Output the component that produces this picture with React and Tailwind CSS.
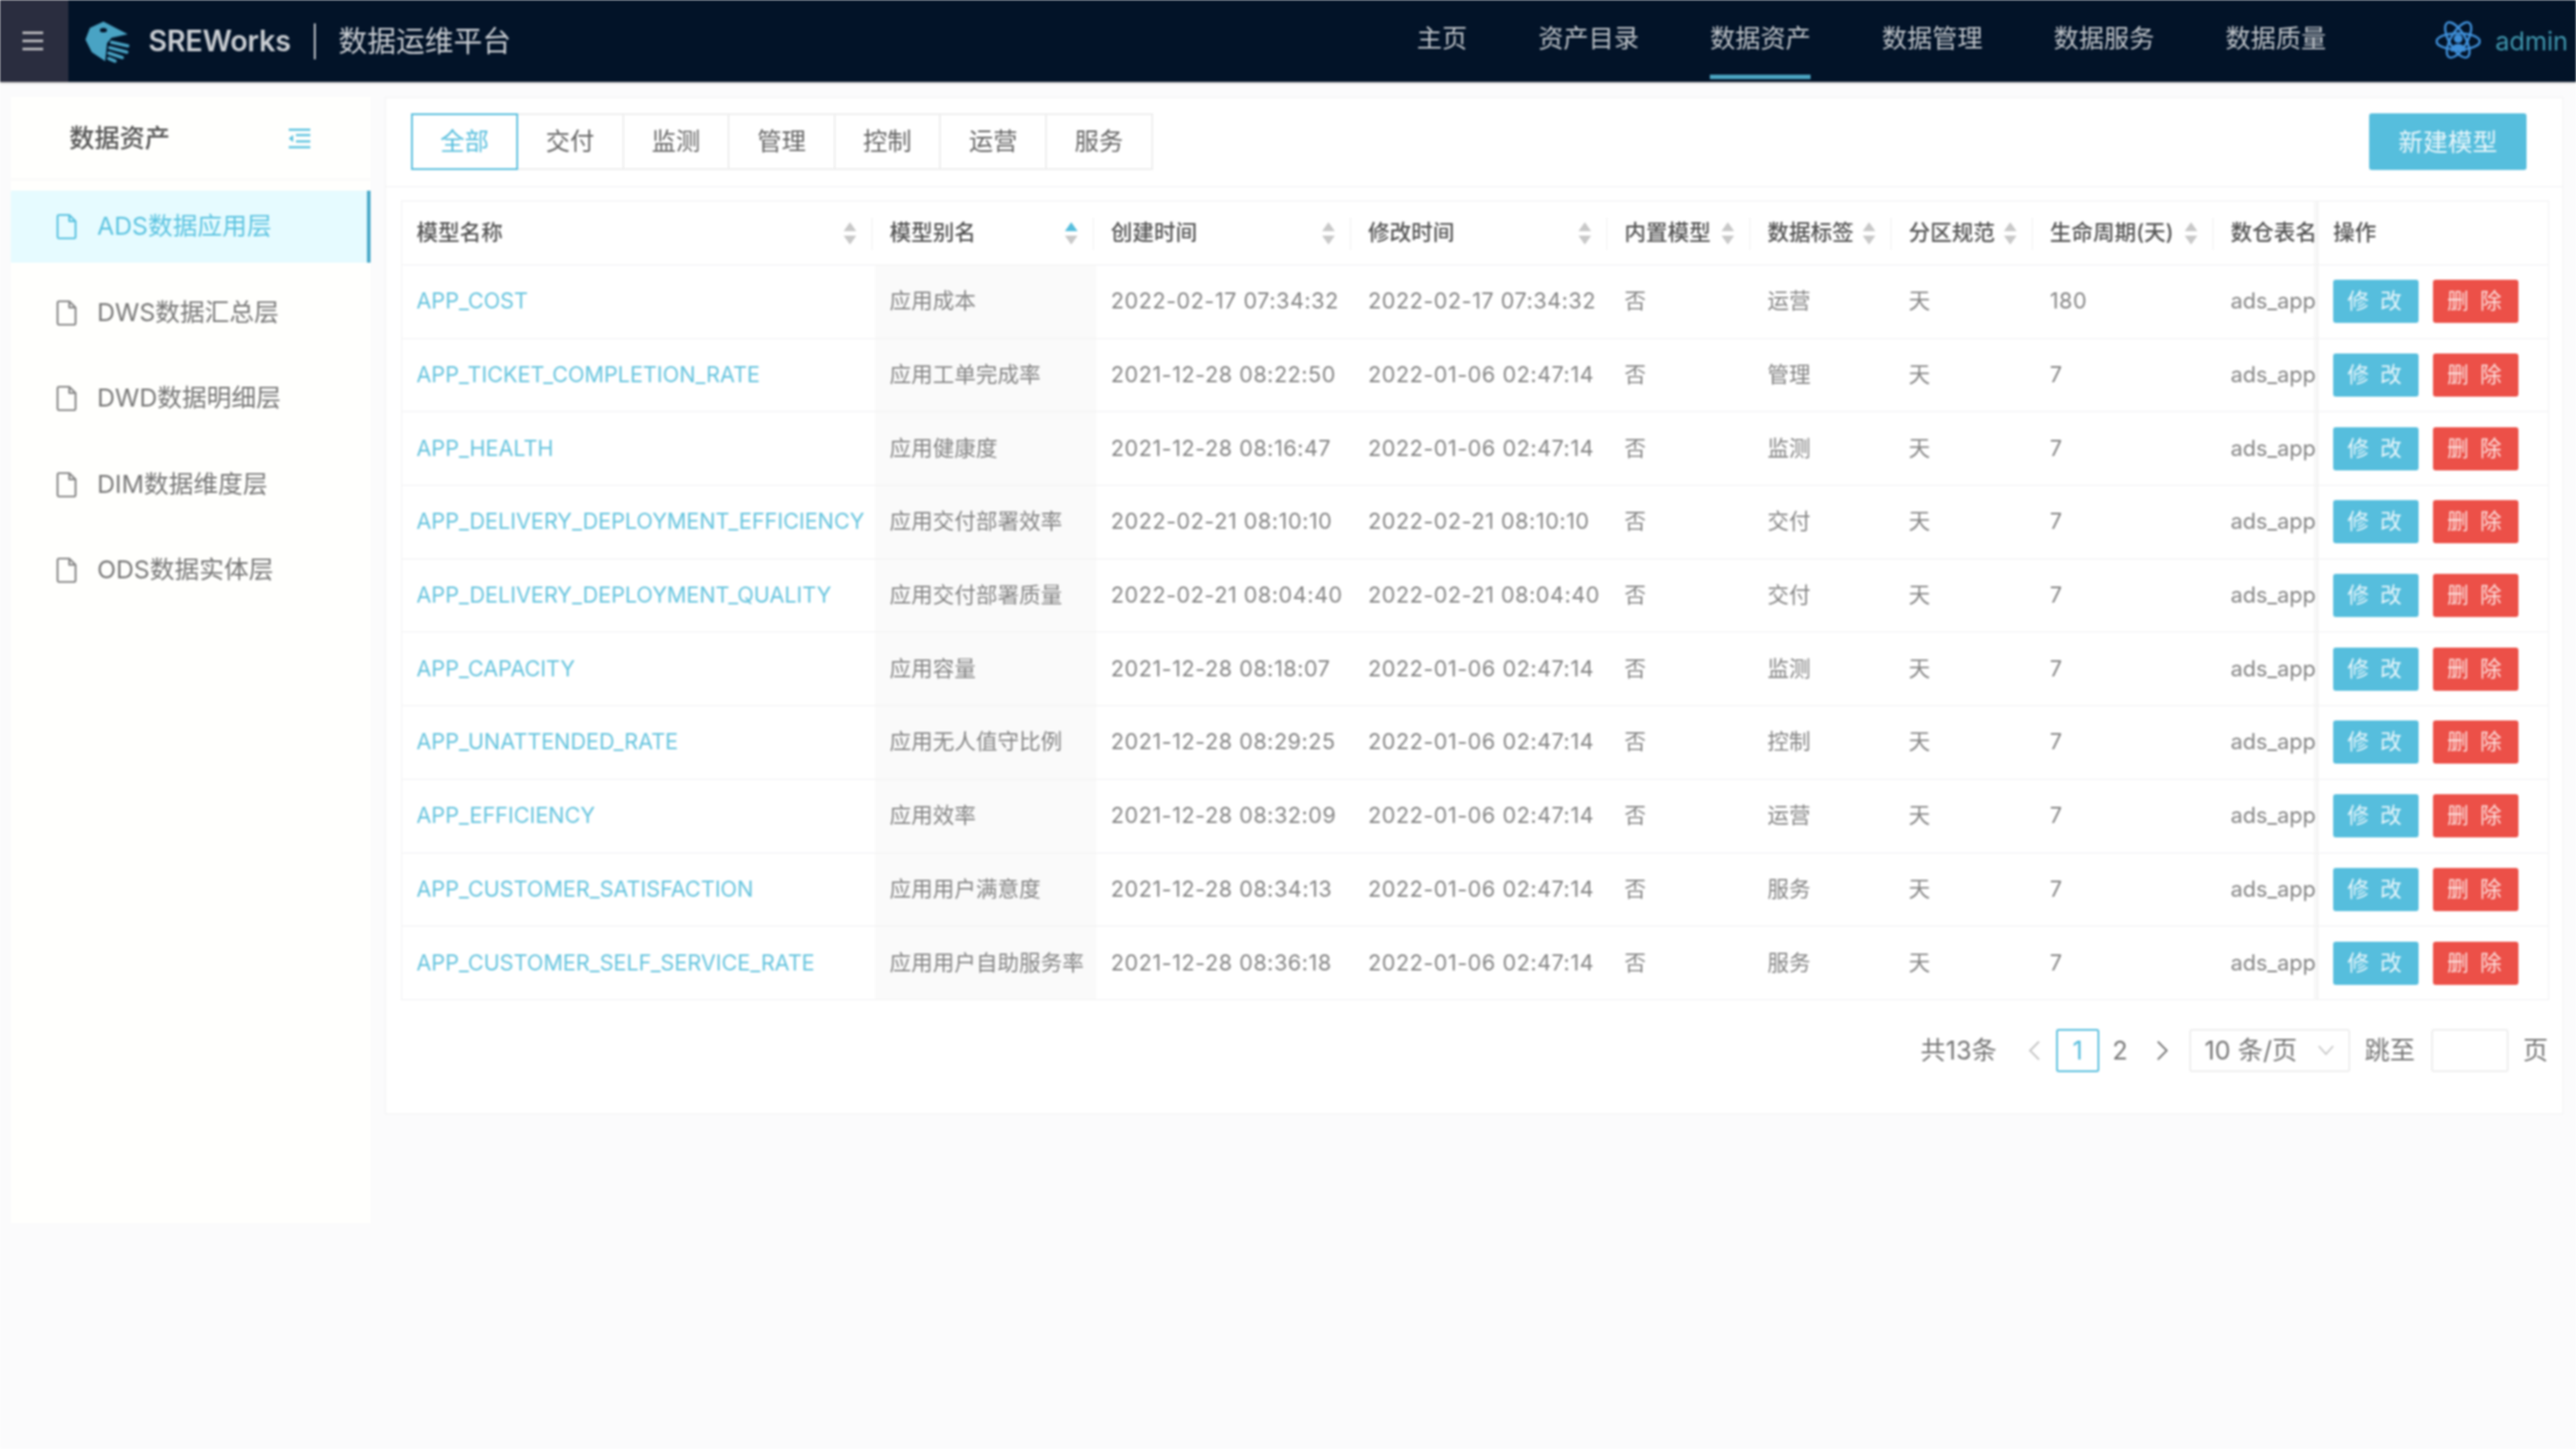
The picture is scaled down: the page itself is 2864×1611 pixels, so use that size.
import React from 'react';

const navItems = ['主页', '资产目录', '数据资产', '数据管理', '数据服务', '数据质量'];
const layers = ['ADS数据应用层', 'DWS数据汇总层', 'DWD数据明细层', 'DIM数据维度层', 'ODS数据实体层'];
const tabs = ['全部', '交付', '监测', '管理', '控制', '运营', '服务'];

const columns = [
  { title: '模型名称', sort: true },
  { title: '模型别名', sort: true, active: true },
  { title: '创建时间', sort: true },
  { title: '修改时间', sort: true },
  { title: '内置模型', sort: true },
  { title: '数据标签', sort: true },
  { title: '分区规范', sort: true },
  { title: '生命周期(天)', sort: true },
  { title: '数仓表名' },
];

const rows = [
  ['APP_COST', '应用成本', '2022-02-17 07:34:32', '2022-02-17 07:34:32', '运营', '180'],
  ['APP_TICKET_COMPLETION_RATE', '应用工单完成率', '2021-12-28 08:22:50', '2022-01-06 02:47:14', '管理', '7'],
  ['APP_HEALTH', '应用健康度', '2021-12-28 08:16:47', '2022-01-06 02:47:14', '监测', '7'],
  ['APP_DELIVERY_DEPLOYMENT_EFFICIENCY', '应用交付部署效率', '2022-02-21 08:10:10', '2022-02-21 08:10:10', '交付', '7'],
  ['APP_DELIVERY_DEPLOYMENT_QUALITY', '应用交付部署质量', '2022-02-21 08:04:40', '2022-02-21 08:04:40', '交付', '7'],
  ['APP_CAPACITY', '应用容量', '2021-12-28 08:18:07', '2022-01-06 02:47:14', '监测', '7'],
  ['APP_UNATTENDED_RATE', '应用无人值守比例', '2021-12-28 08:29:25', '2022-01-06 02:47:14', '控制', '7'],
  ['APP_EFFICIENCY', '应用效率', '2021-12-28 08:32:09', '2022-01-06 02:47:14', '运营', '7'],
  ['APP_CUSTOMER_SATISFACTION', '应用用户满意度', '2021-12-28 08:34:13', '2022-01-06 02:47:14', '服务', '7'],
  ['APP_CUSTOMER_SELF_SERVICE_RATE', '应用用户自助服务率', '2021-12-28 08:36:18', '2022-01-06 02:47:14', '服务', '7'],
];

const gridCols = 'grid grid-cols-[526px_246px_286px_285px_159px_157px_157px_201px_114px_255px]';

function Logo() {
  return (
    <svg width="50" height="50" viewBox="14 10 50 50" fill="none">
      <path d="M35 13 L62 27 L44 31 L39 37 L37 57 L22 47 L15 33 L20 20 Z" fill="#49a3c4" />
      <ellipse cx="35" cy="22.5" rx="4" ry="2.6" fill="#04162b" />
      <g stroke="#49a3c4" strokeWidth="3.6" strokeLinecap="round">
        <path d="M44 36 L62 40" />
        <path d="M42 42 L61 47" />
        <path d="M41 48 L56 53" />
        <path d="M41 54 L48 57" />
      </g>
    </svg>
  );
}

function Atom() {
  return (
    <svg width="50" height="46" viewBox="0 0 50 46" fill="none" stroke="#3f8fd8" strokeWidth="2.6">
      <ellipse cx="25" cy="23" rx="9" ry="24" transform="rotate(30 25 23) scale(1 0.92)" />
      <ellipse cx="25" cy="23" rx="9" ry="24" transform="rotate(-30 25 23) scale(1 0.92)" />
      <ellipse cx="25" cy="23" rx="9" ry="24" transform="rotate(90 25 23)" />
      <circle cx="25" cy="20" r="3.5" fill="#3f8fd8" />
      <path d="M18 33 C18 25 32 25 32 33 Z" fill="#3f8fd8" />
    </svg>
  );
}

function FileIcon({ color }) {
  return (
    <svg width="24" height="30" viewBox="0 0 24 30" fill="none" stroke={color} strokeWidth="2.2" strokeLinejoin="round">
      <path d="M2 4 a2 2 0 0 1 2 -2 H15 L22 9 V26 a2 2 0 0 1 -2 2 H4 a2 2 0 0 1 -2 -2 Z" />
      <path d="M15 2 V9 H22" />
    </svg>
  );
}

function IndentIcon() {
  return (
    <svg width="25" height="24" viewBox="0 0 25 24" fill="#5cc3e0">
      <rect x="1" y="1" width="24" height="2.4" />
      <rect x="9" y="7" width="16" height="2.4" />
      <rect x="9" y="14" width="16" height="2.4" />
      <rect x="1" y="20.5" width="24" height="2.4" />
      <path d="M1 12 L6 8 V16 Z" />
    </svg>
  );
}

function SortIcon({ active }) {
  return (
    <svg width="16" height="27" viewBox="0 0 16 27" className="shrink-0">
      <path d="M8 1 L15 11 H1 Z" fill={active ? '#56bedd' : '#c8c8c8'} />
      <path d="M8 26 L15 16 H1 Z" fill="#c8c8c8" />
    </svg>
  );
}

function Chevron({ dir, color }) {
  return (
    <svg width="14" height="24" viewBox="0 0 14 24" fill="none" stroke={color} strokeWidth="2">
      <path d={dir === 'left' ? 'M12 2 L2 12 L12 22' : 'M2 2 L12 12 L2 22'} />
    </svg>
  );
}

function Header() {
  return (
    <header className="flex h-[91px] items-stretch bg-[#021328] shadow-[0_1px_2px_rgba(0,0,0,0.35)]">
      <div className="flex w-[76px] items-center justify-center bg-[#2a2d3f] pr-[3px]">
        <div className="flex h-[21px] w-[23px] flex-col justify-between">
          <span className="h-[3px] bg-[#b4b4b8]" />
          <span className="h-[3px] bg-[#b4b4b8]" />
          <span className="h-[3px] bg-[#b4b4b8]" />
        </div>
      </div>
      <div className="ml-[18px] flex items-center">
        <Logo />
      </div>
      <div className="ml-[21px] flex items-center text-[32px] font-semibold tracking-[-0.3px] text-[#c9cdd2]">SREWorks</div>
      <div className="ml-[26px] mt-[26px] h-[40px] w-[2px] bg-[#c9cdd2]" />
      <div className="ml-[25px] flex items-center text-[32px] text-[#c9cdd2]">数据运维平台</div>
      <nav className="ml-auto flex gap-[79px]">
        {navItems.map((item) => (
          <div key={item} className="relative flex items-center pb-[6px] text-[28px] text-[#bfc4c9]">
            {item}
            {item === '数据资产' && <span className="absolute bottom-[3px] left-0 h-[5px] w-full bg-[#4aa3c0]" />}
          </div>
        ))}
      </nav>
      <div className="ml-[122px] flex items-center pr-[9px]">
        <Atom />
        <span className="ml-[16px] text-[28px] text-[#3f96ad]">admin</span>
      </div>
    </header>
  );
}

function Sidebar() {
  return (
    <aside className="ml-[12px] h-[1252px] w-[400px] shrink-0 bg-[#fffffd]">
      <div className="flex h-[92px] items-center justify-between border-b border-[#f5f5f5] pl-[65px] pr-[67px]">
        <span className="text-[28px] font-medium text-[#555]">数据资产</span>
        <IndentIcon />
      </div>
      <div className="mt-[12px] flex flex-col gap-[15.5px]">
        {layers.map((name, i) => (
          <div
            key={name}
            className={
              i === 0
                ? 'flex h-[80px] items-center gap-[22px] border-r-4 border-[#49a9c9] bg-[#e6fbff] pl-[50px] text-[27.5px] text-[#5cc3e0]'
                : 'flex h-[80px] items-center gap-[22px] pl-[50px] text-[27.5px] text-[#777]'
            }
          >
            <FileIcon color={i === 0 ? '#5cc3e0' : '#8a8a8a'} />
            {name}
          </div>
        ))}
      </div>
    </aside>
  );
}

function Toolbar() {
  return (
    <div className="flex h-[99px] items-start justify-between border-b border-[#f1f1f2] pl-[28px] pr-[40px] pt-[17px]">
      <div className="flex">
        {tabs.map((tab, i) => (
          <div
            key={tab}
            className={
              i === 0
                ? 'z-10 flex h-[63px] w-[119px] items-center justify-center border-2 border-[#56bedd] pt-[2px] text-[27px] text-[#56bedd]'
                : 'ml-[-1px] flex h-[63px] w-[118.6px] items-center justify-center border-2 border-l border-[#eeeeee] pt-[2px] text-[27px] text-[#666]'
            }
          >
            {tab}
          </div>
        ))}
      </div>
      <div className="flex h-[63px] w-[175px] items-center justify-center rounded-[3px] bg-[#56bedd] pt-[2px] text-[27.5px] text-[#e8f6fb]">新建模型</div>
    </div>
  );
}

function HeaderCell({ col }) {
  return (
    <div className={`relative flex items-center justify-between pl-[16px] pr-[20px] text-[24px] font-medium text-[#555] ${col.sort ? '' : 'overflow-hidden whitespace-nowrap'}`}>
      <span>{col.title}</span>
      {col.sort && <SortIcon active={col.active} />}
      {col.sort && <span className="absolute right-[3px] top-[18px] h-[36px] w-[1px] bg-[#f0f0f0]" />}
    </div>
  );
}

function Cell({ children, className = 'text-[#858585]' }) {
  return <div className={`flex items-center overflow-hidden whitespace-nowrap pl-[16px] text-[24px] ${className}`}>{children}</div>;
}

function FixedCell({ children }) {
  return (
    <div className="relative flex items-center bg-white pl-[16px]">
      <span className="absolute bottom-0 left-[-8px] top-0 w-[8px] bg-gradient-to-r from-transparent to-black/5" />
      {children}
    </div>
  );
}

function ModelTable() {
  return (
    <div className="ml-[17px] mt-[15px] box-content w-[2386px] border-x border-t border-[#f1f1f2]">
      <div className={`${gridCols} h-[71px] border-b border-[#f1f1f2]`}>
        {columns.map((col) => (
          <HeaderCell key={col.title} col={col} />
        ))}
        <FixedCell>
          <span className="text-[24px] font-medium text-[#555]">操作</span>
        </FixedCell>
      </div>
      {rows.map((row) => (
        <div key={row[0]} className={`${gridCols} h-[81.7px] border-b border-[#f1f1f2]`}>
          <Cell className="text-[#66c4de]">{row[0]}</Cell>
          <Cell className="bg-[#fafafa] text-[#858585]">{row[1]}</Cell>
          <Cell className="tracking-[0.6px] text-[#858585]">{row[2]}</Cell>
          <Cell className="tracking-[0.6px] text-[#858585]">{row[3]}</Cell>
          <Cell>否</Cell>
          <Cell>{row[4]}</Cell>
          <Cell>天</Cell>
          <Cell className="tracking-[0.6px] text-[#858585]">{row[5]}</Cell>
          <Cell>ads_app</Cell>
          <FixedCell>
            <button type="button" className="flex h-[48px] w-[95px] items-center justify-center rounded-[3px] bg-[#56bedd] text-[24px] tracking-[3px] text-[#e8f6fb]">修 改</button>
            <button type="button" className="ml-[16px] flex h-[48px] w-[95px] items-center justify-center rounded-[3px] bg-[#ec5048] text-[24px] tracking-[3px] text-[#fde3e1]">删 除</button>
          </FixedCell>
        </div>
      ))}
    </div>
  );
}

function Pagination() {
  return (
    <div className="mt-[32px] flex items-center justify-end pr-[16px] text-[28px] text-[#777]">
      <span>共13条</span>
      <div className="ml-[18px] flex h-[48px] w-[48px] items-center justify-center">
        <Chevron dir="left" color="#c4c4c4" />
      </div>
      <div className="flex h-[48px] w-[48px] items-center justify-center rounded-[3px] border-2 border-[#56bedd] text-[#56bedd]">1</div>
      <div className="flex h-[48px] w-[46px] items-center justify-center">2</div>
      <div className="flex h-[48px] w-[48px] items-center justify-center">
        <Chevron dir="right" color="#777" />
      </div>
      <div className="ml-[6px] flex h-[48px] w-[179px] items-center justify-between rounded-[3px] border-2 border-[#eeeeee] pl-[15px] pr-[15px]">
        <span>10 条/页</span>
        <svg width="20" height="12" viewBox="0 0 20 12" fill="none" stroke="#c4c4c4" strokeWidth="1.8">
          <path d="M2 1 L10 10 L18 1" />
        </svg>
      </div>
      <span className="ml-[16px]">跳至</span>
      <div className="ml-[18px] h-[48px] w-[86px] rounded-[3px] border-2 border-[#eeeeee]" />
      <span className="ml-[16px]">页</span>
    </div>
  );
}

export default function App() {
  return (
    <div className="min-h-screen bg-[#fbfbfc] blur-[1px] font-['Inter','Noto_Sans_CJK_SC',sans-serif]">
      <Header />
      <div className="flex items-start pt-[17px]">
        <Sidebar />
        <main className="ml-[16px] h-[1131px] w-[2422px] border border-[#f1f1f2] bg-white">
          <Toolbar />
          <ModelTable />
          <Pagination />
        </main>
      </div>
    </div>
  );
}
